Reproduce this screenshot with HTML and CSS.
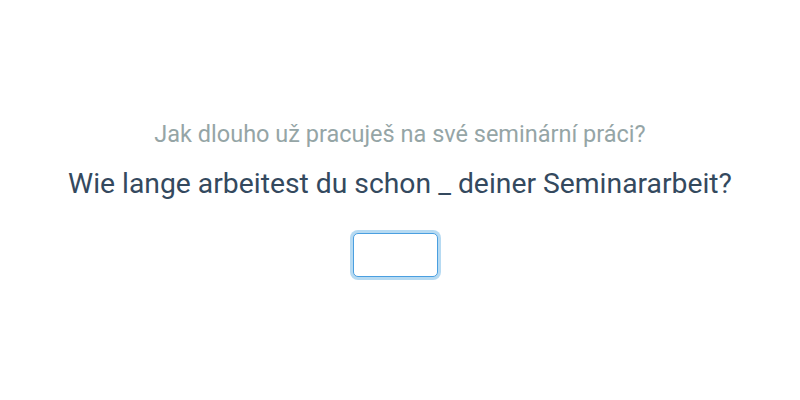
FILE: index.html
```html
<!DOCTYPE html>
<html>
<head>
<meta charset="utf-8">
<link rel="stylesheet" href="styles.css">
</head>
<body>
<main class="card">
  <p class="source">Jak dlouho už pracuješ na své seminární práci?</p>
  <p class="target">Wie lange arbeitest du schon _ deiner Seminararbeit?</p>
  <input class="answer" type="text" aria-label="answer">
</main>
</body>
</html>
```

FILE: styles.css
```css
html, body {
  margin: 0;
  padding: 0;
  background: #ffffff;
}
body {
  width: 800px;
  height: 400px;
  font-family: Roboto, "Noto Sans", sans-serif;
}
.card {
  display: flex;
  flex-direction: column;
  align-items: center;
  padding-top: 118px;
}
.source {
  margin: 0;
  font-size: 23.5px;
  line-height: 32px;
  color: #95a5a6;
}
.target {
  margin: 16px 0 0;
  font-size: 28.3px;
  line-height: 36px;
  color: #34495e;
}
.answer {
  margin: 31px 10px 0 0;
  box-sizing: border-box;
  width: 85px;
  height: 44px;
  border: 1.5px solid #4a9fe0;
  border-radius: 5px;
  box-shadow: 0 0 0 3px rgba(93, 173, 226, 0.45);
  outline: none;
  font-family: Roboto, sans-serif;
  font-size: 20px;
  padding: 0 6px;
}
```
